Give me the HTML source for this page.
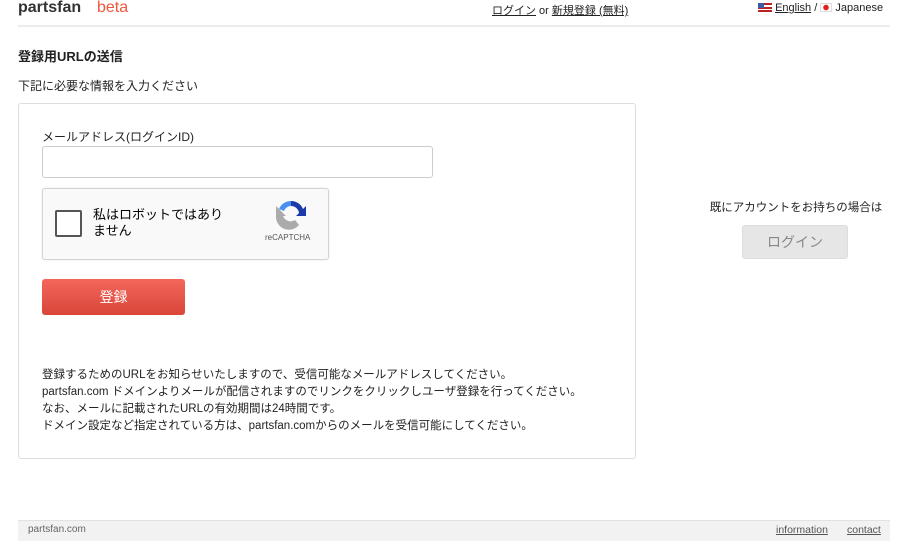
<!DOCTYPE html>
<html><head><meta charset="utf-8"><style>
*{margin:0;padding:0;box-sizing:border-box}
body{width:900px;height:558px;background:#fff;font-family:"Liberation Sans","Noto Sans CJK JP",sans-serif;color:#222;position:relative;overflow:hidden;font-size:12px}
.a{position:absolute;white-space:nowrap}
a{color:#222}
</style></head><body>
<div class="a" style="left:18px;top:-1px;font-size:16px;font-weight:bold;color:#333">partsfan</div>
<div class="a" style="left:97px;top:-1px;font-size:16px;color:#f0553d">beta</div>
<div class="a" style="left:492px;top:2px;font-size:11px"><a href="#">ログイン</a> or <a href="#">新規登録 (無料)</a></div>
<div class="a" style="left:758px;top:2px;font-size:11px">
<span style="display:inline-block;width:14px;height:9px;background:linear-gradient(#b22 0 2px,#fff 2px 4px,#b22 4px 6px,#fff 6px 7px,#b22 7px);position:relative;vertical-align:-1px"><span style="position:absolute;left:0;top:0;width:6px;height:5px;background:#3b5ba5"></span></span> <a href="#">English</a> / <span style="display:inline-block;width:12px;height:9px;background:radial-gradient(circle,#d22 2.5px,#fff 3px);border:1px solid #ddd;vertical-align:-1px"></span> Japanese</div>
<div class="a" style="left:18px;top:25px;width:872px;height:2px;background:#ececec"></div>
<div class="a" style="left:18px;top:46px;font-size:13px;font-weight:bold">登録用URLの送信</div>
<div class="a" style="left:18px;top:77px;font-size:12px">下記に必要な情報を入力ください</div>
<div class="a" style="left:18px;top:103px;width:618px;height:356px;border:1px solid #ddd;border-radius:3px"></div>
<div class="a" style="left:42px;top:128px;font-size:12px">メールアドレス(ログインID)</div>
<div class="a" style="left:42px;top:146px;width:391px;height:32px;border:1px solid #ccc;border-radius:3px"></div>
<div class="a" style="left:42px;top:188px;width:287px;height:72px;border:1px solid #d3d3d3;border-radius:3px;background:#f9f9f9;box-shadow:0 0 3px rgba(0,0,0,.08)"></div>
<div class="a" style="left:55px;top:210px;width:27px;height:27px;border:2px solid #555;border-radius:2px;background:#fff"></div>
<div class="a" style="left:93px;top:207px;font-size:13px;line-height:16px;color:#000">私はロボットではあり<br>ません</div>
<svg class="a" style="left:275px;top:198px" width="32" height="32" viewBox="0 0 32 32">
<path d="M16 3 A13 13 0 0 1 28 11 L31 8 L31 18 L21 18 L24 15 A8 8 0 0 0 16 8 Z" fill="#1c3aa9"/>
<path d="M16 3 A13 13 0 0 0 4 11 L9 13 A8 8 0 0 1 16 8 Z" fill="#4a90f2"/>
<path d="M4 11 L1 8 L1 18 A13 13 0 0 0 24 27 L20 22 A8 8 0 0 1 8 18 L11 18 Z" fill="#ababab"/>
</svg>
<div class="a" style="left:265px;top:233px;font-size:8px;color:#555">reCAPTCHA</div>
<div class="a" style="left:42px;top:279px;width:143px;height:36px;border-radius:3px;background:linear-gradient(#f4665a,#d9463a);color:#fff;font-size:14px;text-align:center;line-height:36px">登録</div>
<div class="a" style="left:42px;top:367px;font-size:11.5px;line-height:17px;color:#222">登録するためのURLをお知らせいたしますので、受信可能なメールアドレスしてください。<br>partsfan.com ドメインよりメールが配信されますのでリンクをクリックしユーザ登録を行ってください。<br>なお、メールに記載されたURLの有効期間は24時間です。<br>ドメイン設定など指定されている方は、partsfan.comからのメールを受信可能にしてください。</div>
<div class="a" style="left:700px;top:199px;width:192px;text-align:center;font-size:11.5px">既にアカウントをお持ちの場合は</div>
<div class="a" style="left:742px;top:225px;width:106px;height:34px;border-radius:3px;background:#e6e6e6;border:1px solid #ddd;color:#888;font-size:14px;text-align:center;line-height:32px">ログイン</div>
<div class="a" style="left:18px;top:520px;width:872px;height:21px;background:#f2f2f2;border-top:1px solid #e2e2e2"></div>
<div class="a" style="left:28px;top:524px;font-size:10px;color:#666">partsfan.com</div>
<div class="a" style="left:776px;top:524px;font-size:10.5px;color:#555"><a href="#" style="color:#555">information</a></div>
<div class="a" style="left:847px;top:524px;font-size:10.5px;color:#555"><a href="#" style="color:#555">contact</a></div>
</body></html>
